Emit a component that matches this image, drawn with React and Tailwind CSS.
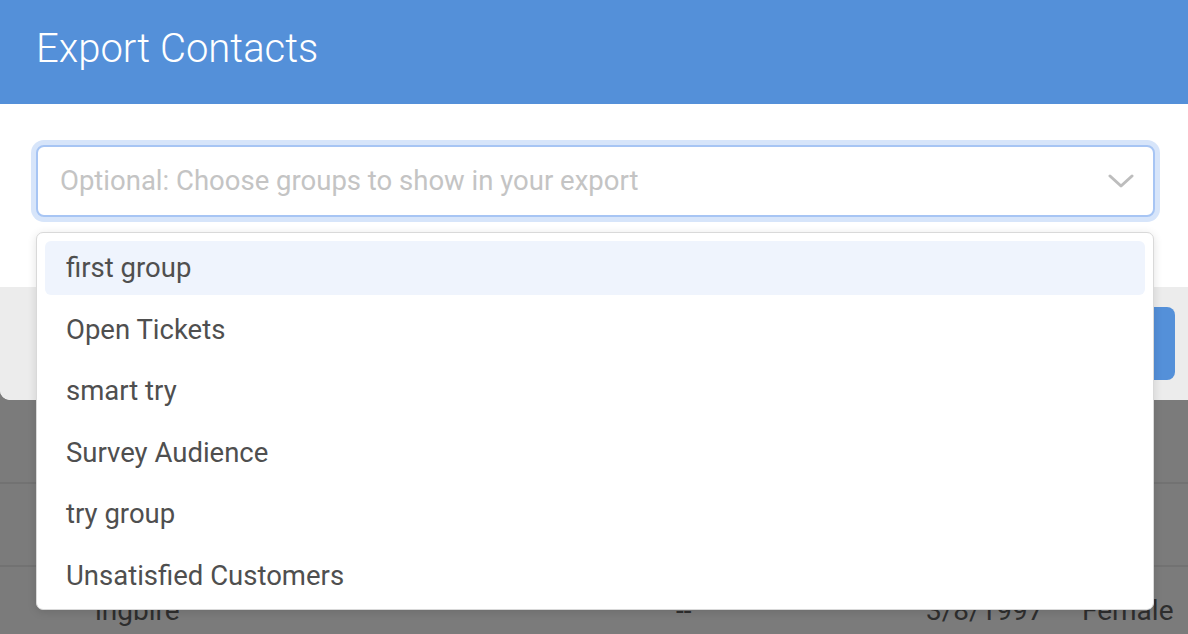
import React from "react";

const groups = [
  "first group",
  "Open Tickets",
  "smart try",
  "Survey Audience",
  "try group",
  "Unsatisfied Customers",
];

export default function App() {
  return (
    <div
      className="relative w-[1188px] h-[634px] overflow-hidden bg-[#7b7b7b]"
      style={{ fontFamily: "Roboto, 'Liberation Sans', sans-serif" }}
    >
      {/* Modal */}
      <div className="w-[1210px] rounded-b-[10px] overflow-hidden bg-white">
        <div className="h-[104px] bg-[#5490d9] flex items-center px-[36px] pb-[6px]">
          <h1 className="text-[40px] font-light text-white leading-none">
            Export Contacts
          </h1>
        </div>
        <div className="h-[183px] pt-[36px] pl-[31px] bg-white">
          <div className="w-[1129px] h-[82px] rounded-[13px] bg-[#d7e5fa] p-[5px]">
            <div className="h-full rounded-[8px] border-2 border-[#a7c5f4] bg-white flex items-center pl-[22px] pr-[19px]">
              <span className="flex-1 text-[27.5px] text-[#c4c4c4] leading-none">
                Optional: Choose groups to show in your export
              </span>
              <svg width="26" height="16" viewBox="0 0 26 16">
                <path d="M2 3 L13 13 L24 3" fill="none" stroke="#bdbdbd" strokeWidth="3" strokeLinecap="round" strokeLinejoin="round" />
              </svg>
            </div>
          </div>
        </div>
        <div className="h-[113px] bg-[#ececec] flex items-center justify-end pr-[35px]">
          <div className="w-[175px] h-[73px] rounded-[8px] bg-[#5490d9]" />
        </div>
      </div>

      {/* Underlying table rows */}
      <div className="h-[84px] border-b-2 border-[#727272]" />
      <div className="h-[83px] border-b-2 border-[#727272]" />
      <div className="h-[85px] flex items-center pl-[95px] pt-[2px] text-[28px] text-[#2e2e2e] leading-none">
        <span className="w-[581px]">ingbire</span>
        <span className="w-[250px]">--</span>
        <span className="w-[156px]">3/8/1997</span>
        <span>Female</span>
      </div>

      {/* Dropdown */}
      <div className="absolute left-[36px] top-[232px] w-[1118px] h-[378px] bg-white border border-[#d9d9d9] rounded-[7px] shadow-[0_2px_10px_rgba(0,0,0,0.12)] p-[8px] flex flex-col gap-[8px]">
        {groups.map((g, i) => (
          <div
            key={g}
            className={
              i === 0
                ? "h-[53.5px] shrink-0 rounded-[6px] bg-[#eff4fd] flex items-center pl-[21px] text-[27.5px] text-[#4f4f4f]"
                : "h-[53.5px] shrink-0 rounded-[6px] flex items-center pl-[21px] text-[27.5px] text-[#4f4f4f]"
            }
          >
            {g}
          </div>
        ))}
      </div>
    </div>
  );
}
